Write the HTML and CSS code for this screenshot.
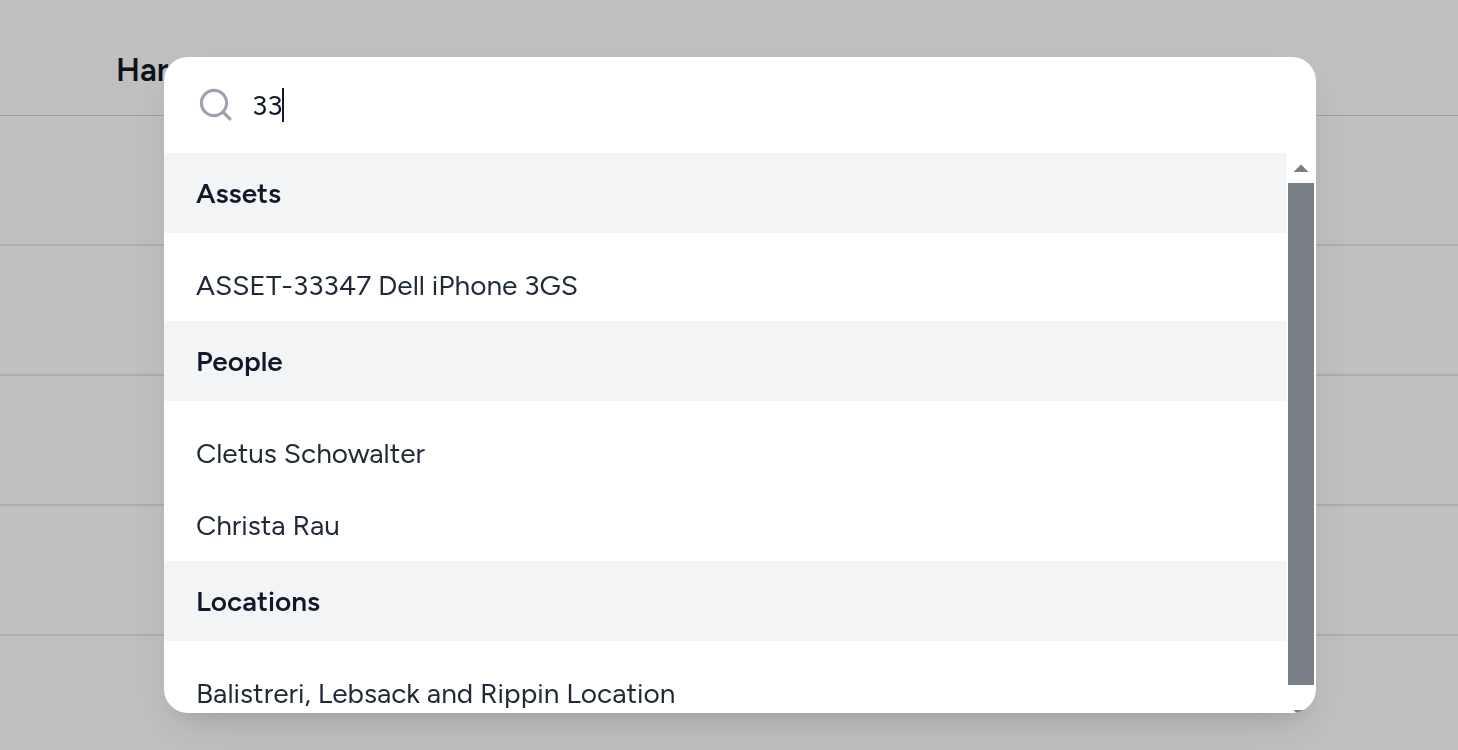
FILE: index.html
```html
<!DOCTYPE html>
<html lang="en">
<head>
    <meta charset="UTF-8">
    <meta name="viewport" content="width=device-width, initial-scale=1.0">
    <title>Search</title>
    <link rel="stylesheet" href="styles.css">
</head>
<body>
    <div class="page">
        <header class="page-header">
            <h1>Har</h1>
        </header>
        <div class="page-rows">
            <div class="page-row"></div>
            <div class="page-row"></div>
            <div class="page-row"></div>
            <div class="page-row"></div>
            <div class="page-row"></div>
        </div>
    </div>

    <div class="overlay">
        <div class="palette" role="dialog" aria-label="Search">
            <label class="search">
                <svg class="search-icon" viewBox="0 0 40 40" aria-hidden="true">
                    <circle cx="18" cy="18" r="12.6"/>
                    <path d="M26.9 26.9l7.9 7.9"/>
                </svg>
                <input class="search-input" type="text" size="2" value="33" aria-label="Search">
                <span class="caret"></span>
            </label>

            <div class="results">
                <div class="groups">
                    <section>
                        <h2>Assets</h2>
                        <ul>
                            <li>ASSET-33347 Dell iPhone 3GS</li>
                        </ul>
                    </section>
                    <section>
                        <h2>People</h2>
                        <ul>
                            <li>Cletus Schowalter</li>
                            <li>Christa Rau</li>
                        </ul>
                    </section>
                    <section>
                        <h2>Locations</h2>
                        <ul>
                            <li>Balistreri, Lebsack and Rippin Location</li>
                        </ul>
                    </section>
                </div>

                <div class="scrollbar" aria-hidden="true">
                    <svg class="scroll-arrow" viewBox="0 0 26 30"><path d="M5.5 19l7.5-7.5 7.5 7.5z"/></svg>
                    <div class="scroll-thumb"></div>
                    <svg class="scroll-arrow" viewBox="0 0 26 30"><path d="M5.5 11l7.5 7.5 7.5-7.5z"/></svg>
                </div>
            </div>
        </div>
    </div>
</body>
</html>
```

FILE: styles.css
```css
* {
    box-sizing: border-box;
}
body {
    margin: 0;
    font-family: Figtree, Lato, sans-serif;
    font-size: 28px;
    line-height: 40px;
    color: #1f2937;
    background: #ffffff;
}
h1, h2, ul {
    margin: 0;
    padding: 0;
}

/* page behind the overlay */
.page {
    height: 100vh;
    overflow: hidden;
}
.page-header {
    padding: 50px 116px 25px;
    border-bottom: 1px solid #d1d2d5;
}
.page-header h1 {
    font-size: 32px;
    font-weight: 600;
    color: #111827;
}
.page-row {
    height: 130px;
    border-bottom: 2px solid #e5e7eb;
}

/* search palette */
.overlay {
    position: fixed;
    inset: 0;
    padding: 57px 142px 37px 164px;
    background: rgba(0, 0, 0, 0.25);
}
.palette {
    display: flex;
    flex-direction: column;
    height: 100%;
    overflow: hidden;
    background: #ffffff;
    border-radius: 24px;
    box-shadow: 0 20px 50px -10px rgba(0, 0, 0, 0.1), 0 16px 20px -12px rgba(0, 0, 0, 0.1);
}
.search {
    display: flex;
    flex-shrink: 0;
    align-items: center;
    height: 96px;
    padding: 0 32px;
}
.search-icon {
    width: 40px;
    height: 40px;
    margin-right: 16px;
    fill: none;
    stroke: #9ca3af;
    stroke-width: 3.1;
}
.search-input {
    field-sizing: content;
    padding: 0;
    border: none;
    outline: none;
    background: transparent;
    font: inherit;
    color: #111827;
}
.caret {
    width: 2px;
    height: 34px;
    background: #111827;
}
.results {
    display: flex;
    flex-shrink: 0;
    height: 576px;
}
.groups {
    flex: 1;
}
.groups h2 {
    padding: 20px 32px;
    font-size: 28px;
    font-weight: 600;
    color: #111827;
    background: #f3f4f6;
}
.groups ul {
    padding-top: 16px;
    list-style: none;
}
.groups li {
    padding: 16px 32px;
}
.scrollbar {
    display: flex;
    flex-direction: column;
    width: 30px;
    padding: 0 2px;
}
.scroll-arrow {
    height: 30px;
    fill: #787f87;
}
.scroll-thumb {
    flex: 1;
    margin-bottom: 14px;
    background: #787f87;
}
```
